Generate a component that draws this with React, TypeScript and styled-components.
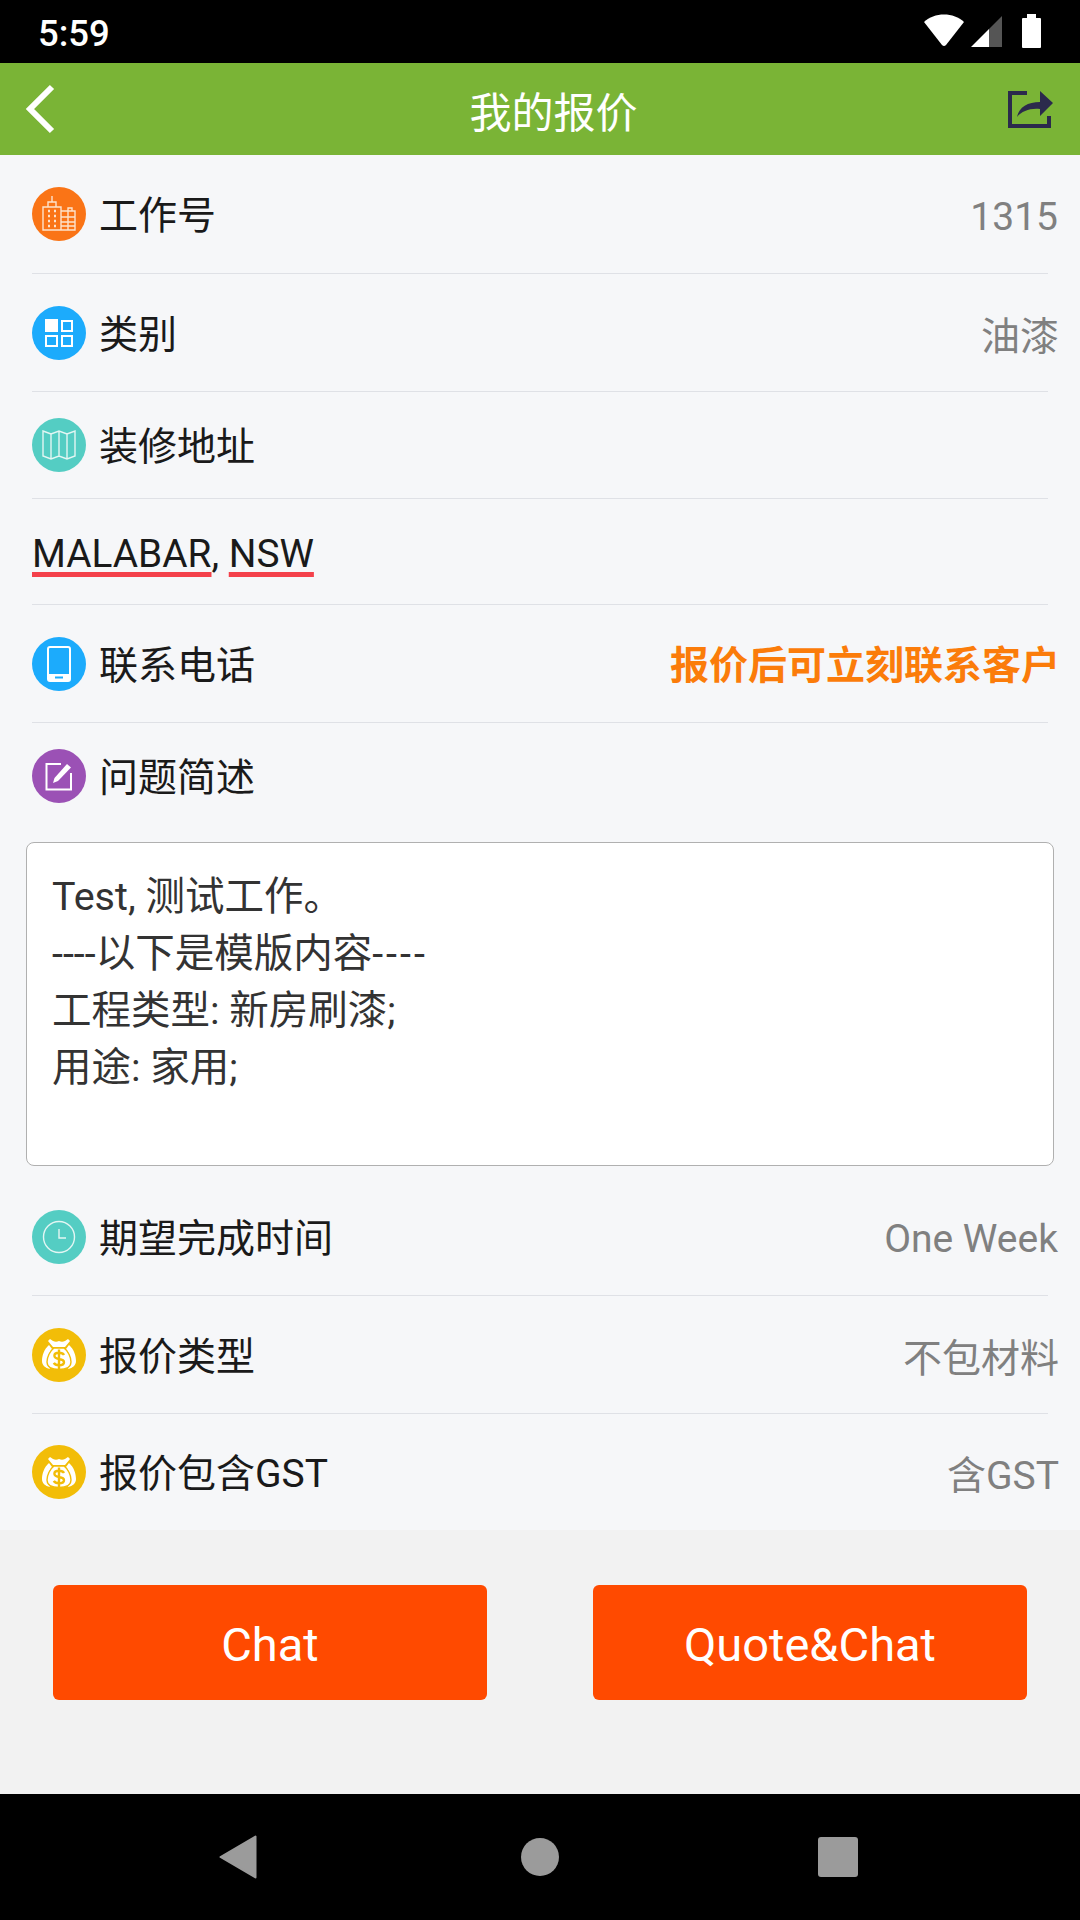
import { ReactNode } from 'react';
import styled, { createGlobalStyle } from 'styled-components';

const GlobalStyle = createGlobalStyle`
  html, body {
    margin: 0;
    padding: 0;
    background: #000;
  }
  * {
    box-sizing: border-box;
  }
`;

const Screen = styled.div`
  width: 1080px;
  height: 1920px;
  display: flex;
  flex-direction: column;
  font-family: Roboto, 'Noto Sans CJK SC', sans-serif;
  overflow: hidden;
`;

const StatusBar = styled.div`
  height: 63px;
  background: #000;
  display: flex;
  align-items: center;
  justify-content: space-between;
  padding: 0 30px 0 38px;
  color: #fff;
  font-size: 36.5px;
  font-weight: 500;
`;

const StatusTime = styled.span`
  padding-top: 4px;
`;

const Header = styled.header`
  height: 92px;
  background: #7ab436;
  display: flex;
  align-items: center;
  justify-content: space-between;
  padding: 0 27px 0 25px;
`;

const Title = styled.h1`
  margin: 0;
  color: #fff;
  font-size: 42px;
  font-weight: 400;
  padding-left: 42px;
`;

const Content = styled.main`
  height: 1375px;
  background: #f6f7f9;
  padding-left: 32px;
`;

const Row = styled.div<{ $height: number; $last?: boolean; $shift?: number }>`
  height: ${(props) => props.$height}px;
  width: 1016px;
  display: flex;
  align-items: center;
  justify-content: space-between;
  border-bottom: ${(props) => (props.$last ? 'none' : '1px solid #dfe1e6')};
  padding-top: ${(props) => (props.$shift && props.$shift > 0 ? props.$shift : 0)}px;
  padding-bottom: ${(props) => (props.$shift && props.$shift < 0 ? -props.$shift : 0)}px;
`;

const RowLabel = styled.div`
  display: flex;
  align-items: center;
  gap: 13px;
  color: #1a1a1a;
  font-size: 39px;
`;

const LabelText = styled.span`
  margin-top: -4px;
`;

const IconCircle = styled.span<{ $color: string }>`
  width: 54px;
  height: 54px;
  border-radius: 50%;
  background: ${(props) => props.$color};
  display: flex;
  align-items: center;
  justify-content: center;
  flex: none;
`;

const RowValue = styled.span<{ $latin?: boolean }>`
  color: #808080;
  font-size: 39px;
  margin-right: ${(props) => (props.$latin ? '-10px' : '-11px')};
  margin-top: ${(props) => (props.$latin ? '5px' : '0')};
`;

const ContactHint = styled.span`
  color: #fb7c0a;
  font-size: 39px;
  font-weight: 700;
  margin-right: -12px;
  margin-top: -4px;
`;

const Address = styled.span`
  color: #1a1a1a;
  font-size: 38.8px;
  padding-top: 4px;
`;

const Misspelled = styled.span`
  text-decoration: underline #f4414b 5px;
  text-underline-offset: 5px;
  text-decoration-skip-ink: none;
`;

const Description = styled.div`
  width: 1028px;
  height: 324px;
  margin-left: -6px;
  background: #fff;
  border: 1px solid #b0b0b0;
  border-radius: 8px;
  padding: 25px 25px;
  color: #333;
  font-size: 39.5px;
  line-height: 57px;
  white-space: pre-line;
`;

const TrailingDashes = styled.span`
  letter-spacing: 3px;
`;

const Footer = styled.div`
  height: 264px;
  background: #f2f2f2;
  padding: 55px 53px 0;
  display: flex;
  justify-content: space-between;
  align-items: flex-start;
`;

const ActionButton = styled.button`
  width: 434px;
  height: 115px;
  border: none;
  border-radius: 6px;
  padding: 3px 0 0;
  background: #ff4a00;
  color: #fff;
  font-family: inherit;
  font-size: 47px;
`;

const NavBar = styled.nav`
  height: 126px;
  background: #000;
  display: grid;
  grid-template-columns: 302px 297px auto;
  align-items: center;
  justify-content: start;
  padding-left: 219px;
`;

const Building = () => (
  <svg width="36" height="36" viewBox="0 0 36 36" fill="none" stroke="#fde3cd" strokeWidth="1.4">
    <path d="M2 34V11h18v23zM20 34h14V15H20M7 11V6h8v5M11 6V0M27 15v-3h4v3M20 21h14M20 26h14M20 30h14M27 15v19" />
    <path d="M7 15h2M13 15h2M7 20h2M13 20h2M7 25h2M13 25h2M7 30h2M13 30h2" strokeWidth="2.4" />
  </svg>
);

const Grid = () => (
  <svg width="28" height="28" viewBox="0 0 28 28" fill="none" stroke="#fff" strokeWidth="2">
    <rect x="1" y="1" width="11" height="11" fill="#fff" />
    <rect x="17" y="2" width="10" height="10" />
    <rect x="1" y="17" width="11" height="10" />
    <rect x="17" y="17" width="10" height="10" />
  </svg>
);

const MapIcon = () => (
  <svg width="34" height="30" viewBox="0 0 34 30" fill="none" stroke="#e3f6f3" strokeWidth="1.4">
    <path d="M1 1l8 3 8-3 8 3 8-3v25l-8 3-8-3-8 3-8-3zM9 4v25M17 1v25M25 4v25" />
  </svg>
);

const Phone = () => (
  <svg width="24" height="36" viewBox="0 0 24 36" fill="none">
    <rect x="1" y="1" width="22" height="34" rx="2" stroke="#fff" strokeWidth="2" />
    <rect x="1" y="28" width="22" height="7" fill="#fff" />
    <rect x="8" y="30.5" width="8" height="2" fill="#1cabfc" />
  </svg>
);

const Edit = () => (
  <svg width="28" height="30" viewBox="0 0 28 30" fill="none">
    <path d="M16 3H1.500v25.500H26V12" stroke="#fff" strokeWidth="2" />
    <path d="M8 22l1.500-5L22 3l4 3.500L13 20z" fill="#fff" />
  </svg>
);

const Clock = () => (
  <svg width="34" height="34" viewBox="0 0 34 34" fill="none" stroke="#e3f6f3" strokeWidth="1.4">
    <circle cx="17" cy="17" r="15.500" />
    <path d="M17 9v9h7" />
  </svg>
);

const MoneyBag = () => (
  <svg width="34" height="31" viewBox="0 0 34 31">
    <path fill="#fff" d="M7 6C2 10 0 17 0 22c0 4 3 7 8 8-3-5-3-15 2-20zM27 6c5 4 7 11 7 16 0 4-3 7-8 8 3-5 3-15-2-20z" />
    <path fill="#fff" d="M8 0l3 2c2 1 4 1 6 0 2 1 4 1 6 0l3-2 2 2-5 6H11L6 2z" />
    <path
      fill="#fff"
      stroke="#f2bd08"
      strokeWidth="1.400"
      d="M12 9h10c4 3 7 9 7 14 0 5-4 7.500-12 7.500S5 28 5 23c0-5 3-11 7-14z"
    />
    <path
      fill="none"
      stroke="#f2bd08"
      strokeWidth="2.400"
      d="M22 16c-.8-1.400-2.600-2.200-5-2.200-3 0-4.600 1.300-4.600 3s1.600 2.700 4.600 3.200 5 1.400 5 3.200-2 3-5 3c-2.600 0-4.400-.8-5.200-2.300M17 10.500V30"
    />
  </svg>
);

const Icon = ({ color, children }: { color: string; children: ReactNode }) => (
  <IconCircle $color={color}>{children}</IconCircle>
);

const App = () => {
  return (
    <>
      <GlobalStyle />
      <Screen>
        <StatusBar>
          <StatusTime>5:59</StatusTime>
          <svg width="130" height="63" viewBox="0 0 130 63">
            <path d="M4 22c10-10 30-10 40 0L26 45q-2 2-4 0z" fill="#fff" />
            <path d="M51 47h18V29z" fill="#fff" />
            <path d="M69 29l13-13v31H69z" fill="#555" />
            <rect x="102" y="18" width="19" height="30" rx="1" fill="#fff" />
            <rect x="107" y="14" width="9" height="5" fill="#fff" />
          </svg>
        </StatusBar>
        <Header>
          <svg width="32" height="50" viewBox="0 0 32 50" fill="none" stroke="#fff" strokeWidth="6">
            <path d="M27 3L5 25l22 22" />
          </svg>
          <Title>我的报价</Title>
          <svg width="45" height="37" viewBox="0 0 45 37" fill="none">
            <path d="M19 2H2v33h39V25" stroke="#2b2a4c" strokeWidth="4" />
            <path d="M9 26c2-10 11-15 23-15V0l13 12-13 13v-7c-10-1-18 2-23 8z" fill="#2b2a4c" />
          </svg>
        </Header>
        <Content>
          <Row $height={119}>
            <RowLabel>
              <Icon color="#fa7416"><Building /></Icon>
              <LabelText>工作号</LabelText>
            </RowLabel>
            <RowValue $latin>1315</RowValue>
          </Row>
          <Row $height={118}>
            <RowLabel>
              <Icon color="#1cabfc"><Grid /></Icon>
              <LabelText>类别</LabelText>
            </RowLabel>
            <RowValue>油漆</RowValue>
          </Row>
          <Row $height={107}>
            <RowLabel>
              <Icon color="#54cdc3"><MapIcon /></Icon>
              <LabelText>装修地址</LabelText>
            </RowLabel>
          </Row>
          <Row $height={106}>
            <Address>
              <Misspelled>MALABAR</Misspelled>, <Misspelled>NSW</Misspelled>
            </Address>
          </Row>
          <Row $height={118}>
            <RowLabel>
              <Icon color="#1cabfc"><Phone /></Icon>
              <LabelText>联系电话</LabelText>
            </RowLabel>
            <ContactHint>报价后可立刻联系客户</ContactHint>
          </Row>
          <Row $height={119} $last $shift={-13}>
            <RowLabel>
              <Icon color="#9b51b5"><Edit /></Icon>
              <LabelText>问题简述</LabelText>
            </RowLabel>
          </Row>
          <Description>
            {'Test, 测试工作。\n----以下是模版内容'}
            <TrailingDashes>----</TrailingDashes>
            {'\n工程类型: 新房刷漆;\n用途: 家用;'}
          </Description>
          <Row $height={130} $shift={12}>
            <RowLabel>
              <Icon color="#54cdc3"><Clock /></Icon>
              <LabelText>期望完成时间</LabelText>
            </RowLabel>
            <RowValue $latin>One Week</RowValue>
          </Row>
          <Row $height={118}>
            <RowLabel>
              <Icon color="#f2bd08"><MoneyBag /></Icon>
              <LabelText>报价类型</LabelText>
            </RowLabel>
            <RowValue>不包材料</RowValue>
          </Row>
          <Row $height={116} $last>
            <RowLabel>
              <Icon color="#f2bd08"><MoneyBag /></Icon>
              <LabelText>报价包含GST</LabelText>
            </RowLabel>
            <RowValue>含GST</RowValue>
          </Row>
        </Content>
        <Footer>
          <ActionButton>Chat</ActionButton>
          <ActionButton>Quote&amp;Chat</ActionButton>
        </Footer>
        <NavBar>
          <svg width="38" height="44" viewBox="0 0 38 44">
            <path d="M36.500 1.500v41L1.500 22z" fill="#9b9b9b" stroke="#9b9b9b" strokeWidth="2" strokeLinejoin="round" />
          </svg>
          <svg width="38" height="38" viewBox="0 0 38 38">
            <circle cx="19" cy="19" r="19" fill="#9b9b9b" />
          </svg>
          <svg width="40" height="40" viewBox="0 0 40 40">
            <rect width="40" height="40" rx="3" fill="#9b9b9b" />
          </svg>
        </NavBar>
      </Screen>
    </>
  );
};

export default App;
